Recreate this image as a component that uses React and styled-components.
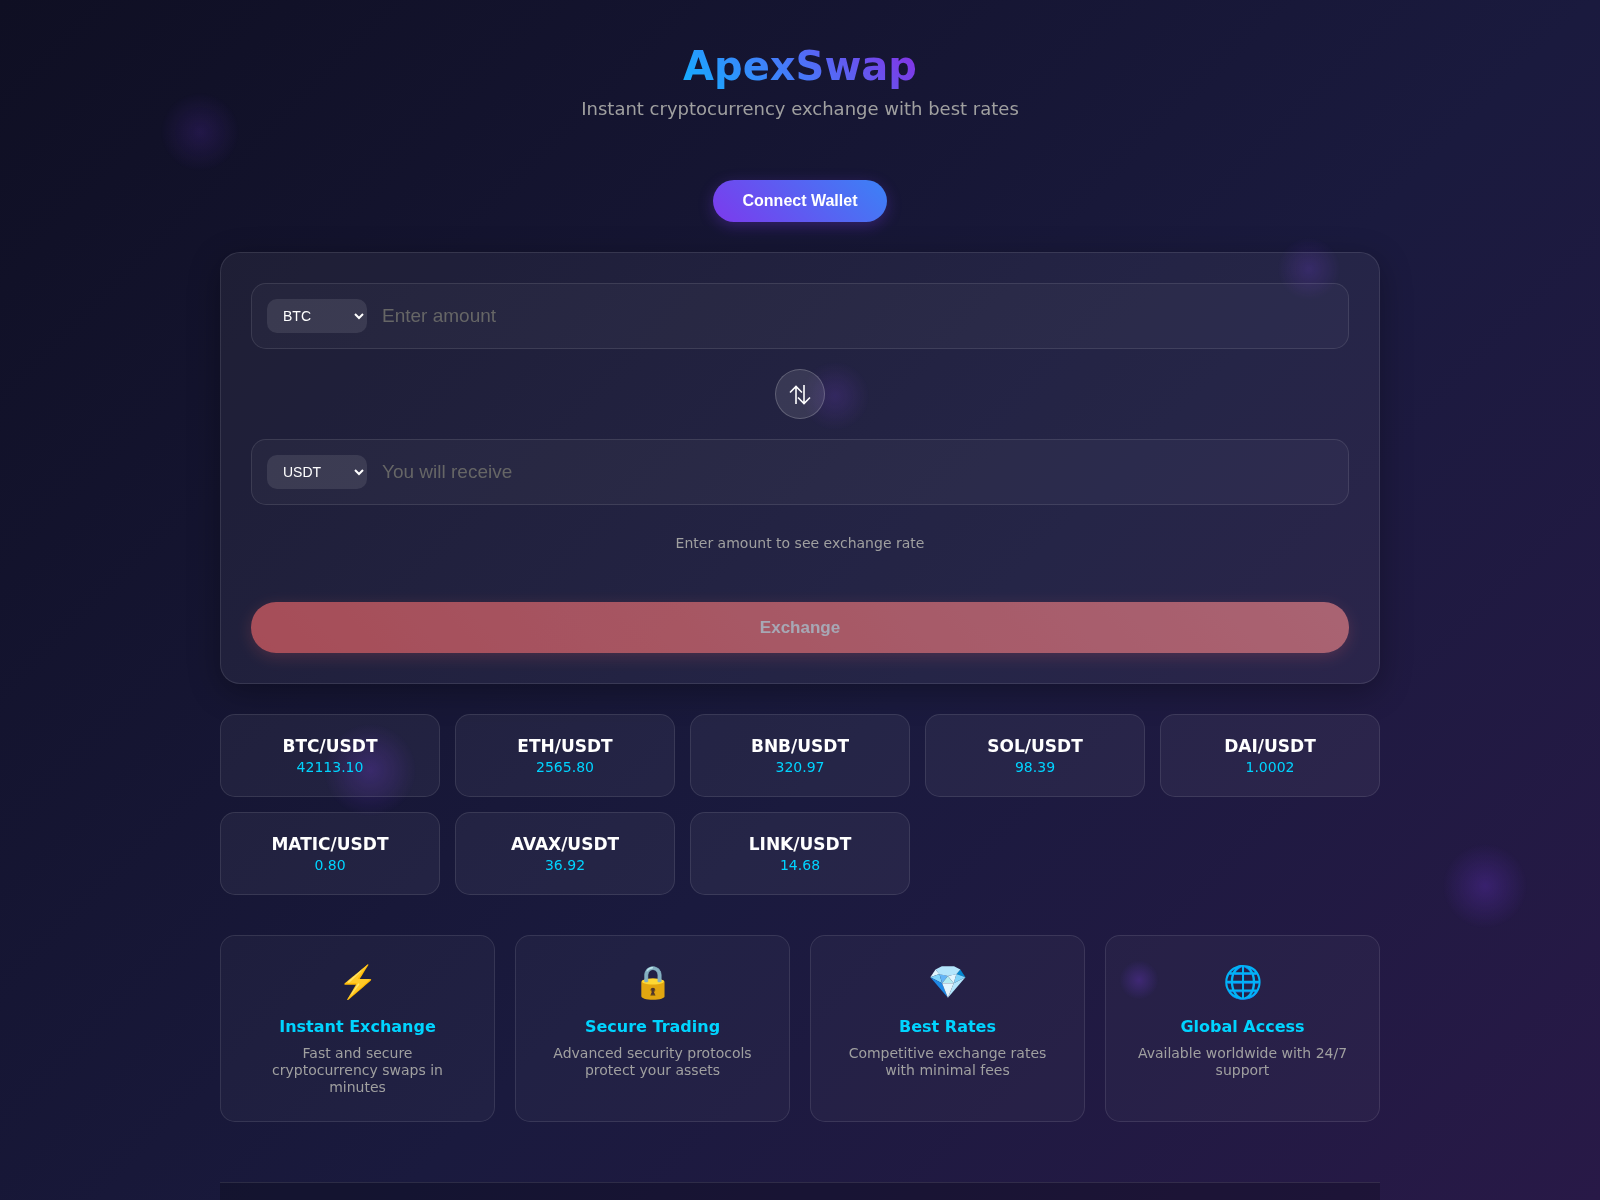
import React, { useState } from 'react'
import styled, { createGlobalStyle } from 'styled-components'

const coins = ['BTC', 'ETH', 'BNB', 'SOL', 'DAI', 'MATIC', 'AVAX', 'LINK', 'USDT']

const prices = [
    { pair: 'BTC/USDT', value: '42113.10' },
    { pair: 'ETH/USDT', value: '2565.80' },
    { pair: 'BNB/USDT', value: '320.97' },
    { pair: 'SOL/USDT', value: '98.39' },
    { pair: 'DAI/USDT', value: '1.0002' },
    { pair: 'MATIC/USDT', value: '0.80' },
    { pair: 'AVAX/USDT', value: '36.92' },
    { pair: 'LINK/USDT', value: '14.68' },
]

const features = [
    { icon: '⚡\uFE0F', title: 'Instant Exchange', text: 'Fast and secure cryptocurrency swaps in minutes' },
    { icon: '🔒', title: 'Secure Trading', text: 'Advanced security protocols protect your assets' },
    { icon: '💎', title: 'Best Rates', text: 'Competitive exchange rates with minimal fees' },
    { icon: '🌐', title: 'Global Access', text: 'Available worldwide with 24/7 support' },
]

// centre of each floating orb (in % of the window), its size and strength
const orbs = [
    { x: 12.5, y: 11, size: 80, glow: 0.16 },
    { x: 81.8, y: 22.4, size: 64, glow: 0.2 },
    { x: 52.2, y: 33, size: 70, glow: 0.18 },
    { x: 23.1, y: 64.2, size: 94, glow: 0.25 },
    { x: 92.8, y: 73.8, size: 86, glow: 0.25 },
    { x: 71.2, y: 81.7, size: 40, glow: 0.28 },
]

export default function App() {
    const [from, setFrom] = useState('BTC')
    const [to, setTo] = useState('USDT')
    const [amount, setAmount] = useState('')

    const swap = () => {
        setFrom(to)
        setTo(from)
    }

  return (
    <>
    <GlobalStyle />
    <Orbs aria-hidden='true'>
        {orbs.map((o) => (
            <Orb key={o.x} $x={o.x} $y={o.y} $size={o.size} $glow={o.glow} />
        ))}
    </Orbs>
    <Root>
        <Header>
            <Logo>ApexSwap</Logo>
            <Tagline>Instant cryptocurrency exchange with best rates</Tagline>
        </Header>
        <WalletButton type='button'>Connect Wallet</WalletButton>
        <ExchangeCard>
            <InputGroup>
                <CoinSelect aria-label='From currency' value={from} onChange={(e) => setFrom(e.target.value)}>
                    {coins.map((c) => <option key={c}>{c}</option>)}
                </CoinSelect>
                <AmountInput aria-label='Amount' placeholder='Enter amount' value={amount} onChange={(e) => setAmount(e.target.value)} />
            </InputGroup>
            <SwapButton type='button' aria-label='Swap currencies' onClick={swap}>
                <svg width='24' height='24' viewBox='0 0 24 24' fill='none' stroke='currentColor' strokeWidth='1.6'>
                    <path d='M8 22V5M2 10.500l6-6 6 6' />
                    <path d='M16 3v17.500M10 15.500l6 6 6-6' />
                </svg>
            </SwapButton>
            <InputGroup>
                <CoinSelect aria-label='To currency' value={to} onChange={(e) => setTo(e.target.value)}>
                    {coins.map((c) => <option key={c}>{c}</option>)}
                </CoinSelect>
                <AmountInput aria-label='You will receive' placeholder='You will receive' readOnly />
            </InputGroup>
            <RateInfo>Enter amount to see exchange rate</RateInfo>
            <ExchangeButton type='button' disabled>Exchange</ExchangeButton>
        </ExchangeCard>
        <PriceGrid>
            {prices.map((p) => (
                <PriceCard key={p.pair}>
                    <Pair>{p.pair}</Pair>
                    <Price>{p.value}</Price>
                </PriceCard>
            ))}
        </PriceGrid>
        <FeatureGrid>
            {features.map((f) => (
                <FeatureCard key={f.title}>
                    <FeatureIcon>{f.icon}</FeatureIcon>
                    <FeatureTitle>{f.title}</FeatureTitle>
                    <FeatureText>{f.text}</FeatureText>
                </FeatureCard>
            ))}
        </FeatureGrid>
        <Footer />
    </Root>
    </>
  )
}

const GlobalStyle = createGlobalStyle`
    *{
        margin: 0;
        padding: 0;
        box-sizing: border-box;
    }
    body{
        font-family: Verdana, 'DejaVu Sans', sans-serif;
        background: linear-gradient(135deg, #0f0f23 0%, #1a1a3e 57%, #281947 100%);
        color: #ffffff;
        min-height: 100vh;
    }
`
const Orbs = styled.div`
    position: fixed;
    inset: 0;
    overflow: hidden;
    pointer-events: none;
    z-index: -1;
`
const Orb = styled.div`
    position: absolute;
    left: ${(p) => p.$x}%;
    top: ${(p) => p.$y}%;
    width: ${(p) => p.$size}px;
    height: ${(p) => p.$size}px;
    transform: translate(-50%, -50%);
    border-radius: 50%;
    background: radial-gradient(circle, rgba(124, 58, 237, ${(p) => p.$glow}) 0%, transparent 70%);
`
const Root = styled.div`
    display: flex;
    flex-direction: column;
    max-width: 1200px;
    min-height: 100vh;
    margin: 0 auto;
    padding: 20px 20px 0px;
`
const Header = styled.header`
    text-align: center;
    padding: 22px 0px 20px;
    margin-bottom: 40px;
`
const Logo = styled.h1`
    font-size: 40px;
    font-weight: bold;
    line-height: 48px;
    width: fit-content;
    margin: 0 auto 8px;
    background: linear-gradient(45deg, #12b0ff, #4b74f8, #8a2be2);
    -webkit-background-clip: text;
    background-clip: text;
    color: transparent;
`
const Tagline = styled.p`
    color: #a0a0a0;
    font-size: 18px;
    line-height: 22px;
`
const WalletButton = styled.button`
    align-self: center;
    padding: 12px 30px;
    margin-bottom: 30px;
    border: none;
    border-radius: 25px;
    background: linear-gradient(45deg, #7c3aed, #3b82f6);
    box-shadow: 0 4px 15px rgba(124, 58, 237, 0.3);
    color: white;
    font-family: Arial, 'Liberation Sans', sans-serif;
    font-size: 16px;
    font-weight: 600;
    line-height: 18px;
    cursor: pointer;
`
const ExchangeCard = styled.main`
    padding: 30px;
    margin-bottom: 30px;
    border: 1px solid rgba(255, 255, 255, 0.1);
    border-radius: 20px;
    background: rgba(255, 255, 255, 0.05);
    box-shadow: 0 8px 32px rgba(0, 0, 0, 0.3);
`
const InputGroup = styled.div`
    display: flex;
    align-items: center;
    gap: 15px;
    padding: 15px;
    border: 1px solid rgba(255, 255, 255, 0.1);
    border-radius: 15px;
    background: rgba(255, 255, 255, 0.03);
`
const CoinSelect = styled.select`
    width: 100px;
    height: 34px;
    padding: 8px 12px;
    border: none;
    border-radius: 10px;
    background: rgba(255, 255, 255, 0.1);
    color: white;
    font-family: Arial, 'Liberation Sans', sans-serif;
    font-size: 14px;
    option{
        background: #1a1a3e;
    }
`
const AmountInput = styled.input`
    flex: 1;
    min-width: 0;
    border: none;
    outline: none;
    background: none;
    color: white;
    font-family: Arial, 'Liberation Sans', sans-serif;
    font-size: 19px;
    &::placeholder{
        color: #666666;
    }
`
const SwapButton = styled.button`
    display: flex;
    align-items: center;
    justify-content: center;
    width: 50px;
    height: 50px;
    margin: 20px auto;
    border: 1px solid rgba(255, 255, 255, 0.2);
    border-radius: 50%;
    background: rgba(255, 255, 255, 0.1);
    color: white;
    cursor: pointer;
`
const RateInfo = styled.p`
    margin: 30px 0px 50px;
    text-align: center;
    color: #a0a0a0;
    font-size: 14px;
    line-height: 17px;
`
const ExchangeButton = styled.button`
    width: 100%;
    padding: 15px;
    border: none;
    border-radius: 25px;
    background: linear-gradient(45deg, #ff6b6b, #ff8e8e);
    box-shadow: 0 4px 15px rgba(255, 107, 107, 0.3);
    color: white;
    font-family: Arial, 'Liberation Sans', sans-serif;
    font-size: 17px;
    font-weight: 600;
    line-height: 21px;
    cursor: pointer;
    &:disabled{
        opacity: 0.6;
        cursor: not-allowed;
    }
`
const PriceGrid = styled.section`
    display: grid;
    grid-template-columns: repeat(auto-fill, minmax(200px, 1fr));
    gap: 15px;
    margin-bottom: 40px;
`
const PriceCard = styled.div`
    padding: 20px;
    border: 1px solid rgba(255, 255, 255, 0.1);
    border-radius: 15px;
    background: rgba(255, 255, 255, 0.05);
    text-align: center;
`
const Pair = styled.div`
    margin-bottom: 2px;
    font-size: 17px;
    font-weight: bold;
    line-height: 22px;
`
const Price = styled.div`
    color: #00d4ff;
    font-size: 14px;
    line-height: 17px;
`
const FeatureGrid = styled.section`
    display: grid;
    grid-template-columns: repeat(auto-fit, minmax(250px, 1fr));
    gap: 20px;
    margin-bottom: 60px;
`
const FeatureCard = styled.article`
    padding: 25px 30px;
    border: 1px solid rgba(255, 255, 255, 0.1);
    border-radius: 15px;
    background: rgba(255, 255, 255, 0.03);
    text-align: center;
`
const FeatureIcon = styled.div`
    margin-bottom: 14px;
    font-size: 32px;
    line-height: 42px;
`
const FeatureTitle = styled.h3`
    margin-bottom: 8px;
    color: #00d4ff;
    font-size: 16px;
    line-height: 20px;
`
const FeatureText = styled.p`
    color: #a0a0a0;
    font-size: 14px;
    line-height: 17px;
`
const Footer = styled.footer`
    flex: 1;
    border-top: 1px solid rgba(255, 255, 255, 0.1);
    background: rgba(0, 0, 0, 0.2);
`
